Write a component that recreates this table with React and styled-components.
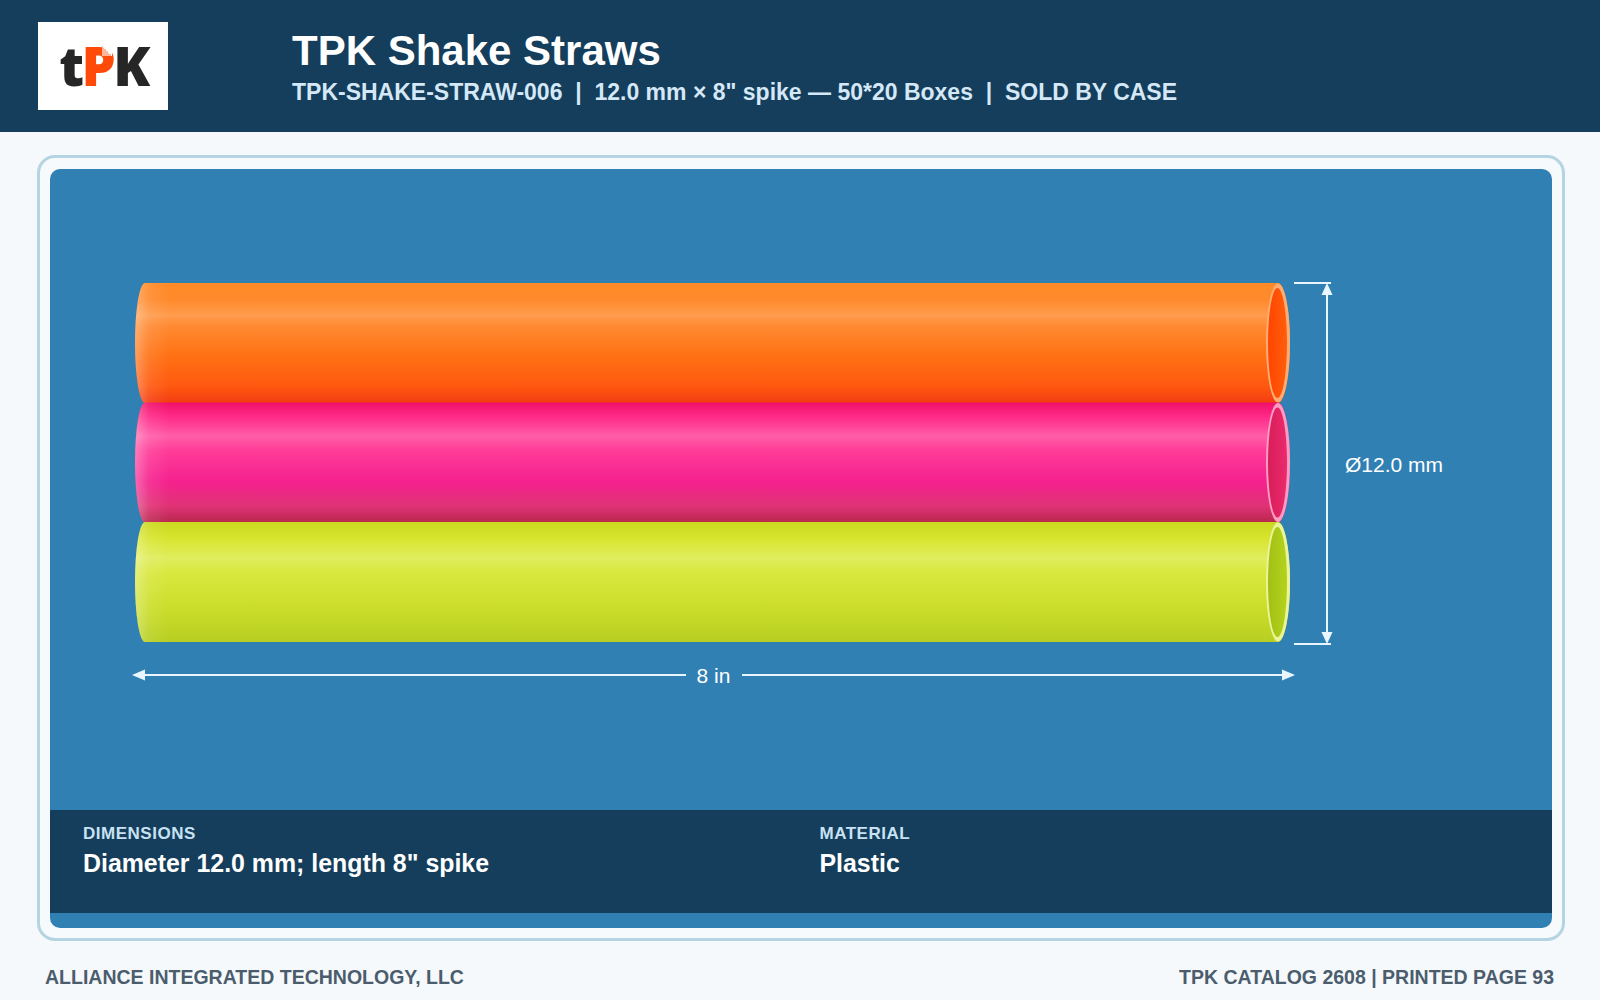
import React from "react";
import styled, { createGlobalStyle } from "styled-components";

const GlobalStyle = createGlobalStyle`
  html, body { margin: 0; padding: 0; }
  body {
    background: #f6f9fc;
    font-family: "Liberation Sans", Arial, sans-serif;
  }
`;

const Page = styled.div`
  width: 1600px;
  height: 1000px;
  display: flex;
  flex-direction: column;
  background: #f6f9fc;
  overflow: hidden;
`;

const Header = styled.header`
  height: 132px;
  flex: none;
  background: #143e5b;
  display: flex;
  align-items: center;
  padding: 0 38px;
  gap: 124px;
  box-sizing: border-box;
`;

const LogoBox = styled.div`
  width: 130px;
  height: 88px;
  flex: none;
  background: #ffffff;
  display: flex;
  align-items: center;
  justify-content: center;
  padding: 0 0 2px 1px;
  box-sizing: border-box;
`;

const LogoLetter = styled.span`
  position: relative;
  font-family: "Open Sans", "Liberation Sans", sans-serif;
  font-weight: 800;
  font-size: 54px;
  line-height: 1;
  letter-spacing: -2.5px;
  color: ${(p) => (p.$accent ? "#ff4a0a" : "#262626")};
`;

const Fold = styled.span`
  position: absolute;
  top: 8px;
  right: 1px;
  width: 10px;
  height: 10px;
  background: linear-gradient(225deg, #ffffff 50%, #ffb69a 50%);
`;

const TitleBlock = styled.div`
  display: flex;
  flex-direction: column;
  padding-top: 2px;
`;

const Title = styled.h1`
  margin: 0;
  font-size: 42px;
  line-height: 44px;
  font-weight: 700;
  color: #ffffff;
`;

const Subtitle = styled.div`
  margin-top: 6px;
  font-size: 23px;
  line-height: 26px;
  font-weight: 700;
  color: #d4e8f7;
  white-space: pre;
`;

const Main = styled.main`
  padding: 23px 35px 0 37px;
`;

const Card = styled.section`
  border: 3px solid #b4d4e1;
  border-radius: 18px;
  padding: 11px 10px 10px 10px;
  background: #f7fafd;
`;

const Panel = styled.div`
  background: #3180b4;
  border-radius: 10px;
  overflow: hidden;
  padding-bottom: 15px;
`;

const ImageArea = styled.div`
  height: 641px;
  position: relative;
`;

const Drawing = styled.svg`
  display: block;
  width: 1502px;
  height: 641px;
`;

const SpecBar = styled.div`
  height: 103px;
  box-sizing: border-box;
  background: #143e5b;
  display: grid;
  grid-template-columns: 1fr 1fr;
  column-gap: 36px;
  padding: 14px 32px 0 33px;
`;

const Spec = styled.div`
  display: flex;
  flex-direction: column;
`;

const SpecLabel = styled.div`
  font-size: 17px;
  line-height: 20px;
  font-weight: 700;
  letter-spacing: 0.03em;
  color: #c8e2f4;
`;

const SpecValue = styled.div`
  margin-top: 4px;
  font-size: 24.9px;
  line-height: 30px;
  font-weight: 700;
  color: #ffffff;
`;

const Footer = styled.footer`
  display: flex;
  justify-content: space-between;
  padding: 25px 46px 0 45px;
  font-size: 19.5px;
  line-height: 22px;
  font-weight: 700;
  color: #4b5d6c;
`;

const straws = [
  {
    id: "or",
    y: 114,
    stops: [
      [0, "#ff8a26"],
      [0.14, "#ff8a2c"],
      [0.27, "#ff9c4e"],
      [0.36, "#ff8a32"],
      [0.6, "#ff7214"],
      [0.86, "#ff5810"],
      [1, "#f23c12"],
    ],
    rim: "#ffad74",
    inner: "#ff5e0c",
    innerDark: "#ff4600",
  },
  {
    id: "pk",
    y: 233.5,
    stops: [
      [0, "#f0106a"],
      [0.12, "#ff2a88"],
      [0.28, "#ff5ea8"],
      [0.4, "#ff3c98"],
      [0.66, "#f5218e"],
      [0.86, "#e03276"],
      [1, "#b8284c"],
    ],
    rim: "#ff9cc4",
    inner: "#ea2a6c",
    innerDark: "#d81e5a",
  },
  {
    id: "yl",
    y: 353,
    stops: [
      [0, "#cad820"],
      [0.14, "#d8e52e"],
      [0.3, "#e0ed5e"],
      [0.42, "#d9e83e"],
      [0.72, "#cbdd2a"],
      [1, "#b6cf22"],
    ],
    rim: "#eaf49a",
    inner: "#b4d21c",
    innerDark: "#a2c014",
  },
];

const H = 120;
const X0 = 85;
const XR = 1228;

function Straw({ s }) {
  const top = s.y;
  const bot = s.y + H;
  const cy = s.y + H / 2;
  const d = `M ${X0 + 10} ${top} L ${XR} ${top} A 12 ${H / 2} 0 0 1 ${XR} ${bot} L ${X0 + 10} ${bot} A 10 ${H / 2} 0 0 1 ${X0 + 10} ${top} Z`;
  return (
    <g>
      <path d={d} fill={`url(#g-${s.id})`} />
      <path d={d} fill="url(#edge)" opacity="0.35" />
      <ellipse cx={XR} cy={cy} rx={12} ry={H / 2 - 0.5} fill={s.rim} />
      <ellipse cx={XR - 0.5} cy={cy} rx={9.5} ry={H / 2 - 5} fill={`url(#in-${s.id})`} />
    </g>
  );
}

function StrawDrawing() {
  return (
    <Drawing viewBox="0 0 1502 641">
      <defs>
        {straws.map((s) => (
          <linearGradient key={s.id} id={`g-${s.id}`} x1="0" y1="0" x2="0" y2="1">
            {s.stops.map(([o, c]) => (
              <stop key={o} offset={o} stopColor={c} />
            ))}
          </linearGradient>
        ))}
        {straws.map((s) => (
          <linearGradient key={s.id} id={`in-${s.id}`} x1="0" y1="0" x2="1" y2="0">
            <stop offset="0" stopColor={s.innerDark} />
            <stop offset="1" stopColor={s.inner} />
          </linearGradient>
        ))}
        <linearGradient id="edge" x1="0" y1="0" x2="1" y2="0">
          <stop offset="0" stopColor="#ffffff" stopOpacity="0.9" />
          <stop offset="0.012" stopColor="#ffffff" stopOpacity="0.25" />
          <stop offset="0.03" stopColor="#ffffff" stopOpacity="0" />
          <stop offset="1" stopColor="#ffffff" stopOpacity="0" />
        </linearGradient>
      </defs>
      {straws.map((s) => (
        <Straw key={s.id} s={s} />
      ))}

      <g stroke="#eaf6ff" strokeWidth="2" fill="none">
        <line x1="1244" y1="114" x2="1281" y2="114" />
        <line x1="1244" y1="475" x2="1281" y2="475" />
        <line x1="1277" y1="120" x2="1277" y2="469" />
        <line x1="84" y1="506" x2="636" y2="506" />
        <line x1="692" y1="506" x2="1243" y2="506" />
      </g>
      <g fill="#eaf6ff">
        <polygon points="1277,114 1271.5,126 1282.5,126" />
        <polygon points="1277,475 1271.5,463 1282.5,463" />
        <polygon points="82,506 95,500.5 95,511.5" />
        <polygon points="1245,506 1232,500.5 1232,511.5" />
      </g>
      <text x="663.5" y="513.5" textAnchor="middle" fill="#ffffff" fontSize="21" fontFamily="Liberation Sans, Arial, sans-serif">
        8 in
      </text>
      <text x="1295" y="303" fill="#ffffff" fontSize="21" fontFamily="Liberation Sans, Arial, sans-serif">
        Ø12.0 mm
      </text>
    </Drawing>
  );
}

export default function App() {
  return (
    <Page>
      <GlobalStyle />
      <Header>
        <LogoBox>
          <LogoLetter>t</LogoLetter>
          <LogoLetter $accent>
            P
            <Fold />
          </LogoLetter>
          <LogoLetter>K</LogoLetter>
        </LogoBox>
        <TitleBlock>
          <Title>TPK Shake Straws</Title>
          <Subtitle>{'TPK-SHAKE-STRAW-006  |  12.0 mm × 8" spike — 50*20 Boxes  |  SOLD BY CASE'}</Subtitle>
        </TitleBlock>
      </Header>
      <Main>
        <Card>
          <Panel>
            <ImageArea>
              <StrawDrawing />
            </ImageArea>
            <SpecBar>
              <Spec>
                <SpecLabel>DIMENSIONS</SpecLabel>
                <SpecValue>Diameter 12.0 mm; length 8" spike</SpecValue>
              </Spec>
              <Spec>
                <SpecLabel>MATERIAL</SpecLabel>
                <SpecValue>Plastic</SpecValue>
              </Spec>
            </SpecBar>
          </Panel>
        </Card>
      </Main>
      <Footer>
        <span>ALLIANCE INTEGRATED TECHNOLOGY, LLC</span>
        <span>TPK CATALOG 2608 | PRINTED PAGE 93</span>
      </Footer>
    </Page>
  );
}
